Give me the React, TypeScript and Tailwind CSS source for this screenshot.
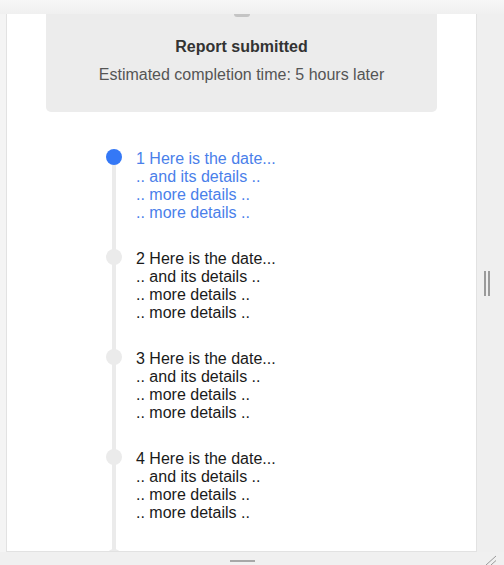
import React from "react";

type Step = { id: number; active?: boolean };

const steps: Step[] = [
  { id: 1, active: true },
  { id: 2 },
  { id: 3 },
  { id: 4 },
  { id: 5 },
];

const TimelineItem = ({ id, active, first }: Step & { first: boolean }) => {
  return (
    <li className="relative flex pb-[27px]">
      <div
        className={`absolute left-[6px] w-[4px] bg-[#ebebeb] bottom-0 ${
          first ? "top-[8px]" : "top-0"
        }`}
      />
      <div
        className={`relative z-10 h-4 w-4 shrink-0 rounded-full ${
          active ? "bg-[#3478f6]" : "bg-[#ebebeb]"
        }`}
      />
      <div
        className={`ml-[14px] pt-[1px] text-[16px] leading-[18px] ${
          active ? "text-[#4a80ea]" : "text-[#1a1a1a]"
        }`}
      >
        <div>{id} Here is the date...</div>
        <div>.. and its details ..</div>
        <div>.. more details ..</div>
        <div>.. more details ..</div>
      </div>
    </li>
  );
};

export default function App() {
  return (
    <div
      className="flex h-[565px] w-[504px] flex-col overflow-hidden bg-[#f4f4f4]"
      style={{ fontFamily: '"Liberation Sans", Arial, sans-serif' }}
    >
      <div className="h-[14px] shrink-0 bg-gradient-to-b from-[#f7f7f7] to-[#f0f0f0]" />
      <div className="flex min-h-0 flex-1">
        <div className="w-[6px] shrink-0" />
        <div className="w-[471px] shrink-0 overflow-hidden border-x border-b border-[#e2e2e2] bg-white">
          <div className="relative mx-[39px] rounded-b-[5px] bg-[#ececec] pb-[28px] pt-[24px] text-center">
            <div className="absolute left-1/2 top-0 h-[3px] w-[16px] -translate-x-1/2 rounded-b-full bg-[#c4c4c4]" />
            <div className="text-[16px] font-bold leading-[18px] text-[#333333]">
              Report submitted
            </div>
            <div className="mt-[10px] text-[16px] leading-[18px] text-[#555555]">
              Estimated completion time: 5 hours later
            </div>
          </div>
          <ul className="pl-[99px] pt-[37px]">
            {steps.map((s, i) => (
              <TimelineItem key={s.id} {...s} first={i === 0} />
            ))}
          </ul>
        </div>
        <div className="flex flex-1 items-center justify-center bg-[#efefef]">
          <div className="flex gap-[2px] pr-[8px]">
            <div className="h-[25px] w-[2px] bg-[#9a9a9a]" />
            <div className="h-[25px] w-[2px] bg-[#9a9a9a]" />
          </div>
        </div>
      </div>
      <div className="relative h-[13px] shrink-0 bg-[#f0f0f0]">
        <div className="absolute left-[230px] top-[8px] h-[2px] w-[25px] bg-[#a8a8a8]" />
        <svg
          className="absolute right-[8px] top-[3px]"
          width="11"
          height="10"
          viewBox="0 0 11 10"
        >
          <line x1="1" y1="10" x2="11" y2="1" stroke="#9a9a9a" strokeWidth="1" />
          <line x1="6" y1="10" x2="11" y2="5.5" stroke="#9a9a9a" strokeWidth="1" />
        </svg>
      </div>
    </div>
  );
}
